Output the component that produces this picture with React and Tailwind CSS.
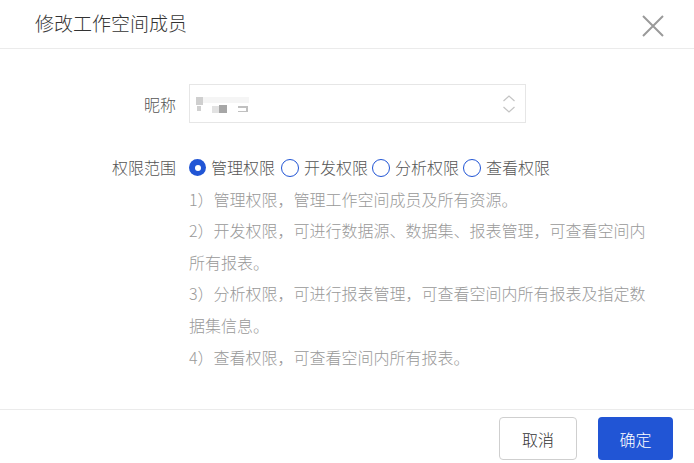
import React from "react";

const font = { fontFamily: '"Noto Sans CJK SC", "Noto Sans", sans-serif' };

function Radio({ checked, label, className = "" }) {
  return (
    <div className={"flex items-center " + className}>
      {checked ? (
        <span className="w-[17px] h-[17px] rounded-full bg-[#2155d5] flex items-center justify-center">
          <span className="w-[6px] h-[6px] rounded-full bg-white" />
        </span>
      ) : (
        <span className="w-[18px] h-[18px] rounded-full border-[1.5px] border-[#2155d5] bg-white" />
      )}
      <span className="ml-[5px] text-[16px] text-[#555]">{label}</span>
    </div>
  );
}

export default function App() {
  return (
    <div className="w-[694px] h-[463px] bg-white flex flex-col overflow-hidden font-light" style={font}>
      <div className="h-[49px] shrink-0 flex items-center justify-between pl-[35px] pr-[29px] pb-[4px] border-b border-[#ebebeb]">
        <span className="text-[19px] text-[#333] leading-none">修改工作空间成员</span>
        <svg width="24" height="24" viewBox="0 0 24 24" className="mt-[8px]">
          <path d="M2 2 L22 22 M22 2 L2 22" stroke="#9a9a9a" strokeWidth="2" fill="none" />
        </svg>
      </div>

      <div className="h-[360px] shrink-0 pt-[35px]">
        <div className="flex items-center h-[39px]">
          <div className="w-[176px] text-right text-[16px] text-[#555]">昵称</div>
          <div className="ml-[13px] w-[337px] h-[39px] border border-[#e6e6e6] flex items-center justify-between pl-[3px] pr-[8px]">
            <div className="relative w-[60px] h-[22px] mt-[2px]">
              <span className="absolute left-[3px] top-[3px] w-[7px] h-[8px] bg-[#cfcfcf]" />
              <span className="absolute left-[10px] top-[3px] w-[46px] h-[6px] bg-[#f5f5f5]" />
              <span className="absolute left-[4px] top-[12px] w-[4px] h-[5px] bg-[#d0d0d0]" />
              <span className="absolute left-[19px] top-[12px] w-[7px] h-[7px] bg-[#e2e2e2]" />
              <span className="absolute left-[26px] top-[11px] w-[8px] h-[8px] bg-[#a6a6a6]" />
              <span className="absolute left-[45px] top-[12px] w-[10px] h-[2px] bg-[#c0c0c0]" />
              <span className="absolute left-[53px] top-[12px] w-[2px] h-[5px] bg-[#c0c0c0]" />
              <span className="absolute left-[45px] top-[17px] w-[10px] h-[1px] bg-[#c0c0c0]" />
            </div>
            <svg width="16" height="20" viewBox="0 0 16 20">
              <path d="M2.5 7 L8 2 L13.5 7 M2.5 13 L8 18 L13.5 13" stroke="#c4c4c4" strokeWidth="1.2" fill="none" />
            </svg>
          </div>
        </div>

        <div className="flex mt-[29px]">
          <div className="w-[176px] text-right text-[16px] text-[#555] leading-[31.6px]">权限范围</div>
          <div className="ml-[13px] w-[470px] text-[16px] leading-[31.6px]">
            <div className="flex items-center h-[31.6px]">
              <Radio checked label="管理权限" className="mr-[6px]" />
              <Radio label="开发权限" className="mr-[4px]" />
              <Radio label="分析权限" className="mr-[4px]" />
              <Radio label="查看权限" />
            </div>
            <div className="text-[#999]">
              <p>1）管理权限，管理工作空间成员及所有资源。</p>
              <p>2）开发权限，可进行数据源、数据集、报表管理，可查看空间内所有报表。</p>
              <p>3）分析权限，可进行报表管理，可查看空间内所有报表及指定数据集信息。</p>
              <p>4）查看权限，可查看空间内所有报表。</p>
            </div>
          </div>
        </div>
      </div>

      <div className="flex-1 border-t border-[#ebebeb] flex items-start justify-end pt-[7px] pr-[21px]">
        <button className="w-[78px] h-[43px] border border-[#cfcfcf] rounded-[4px] bg-white text-[16px] text-[#333]">取消</button>
        <button className="ml-[21px] w-[75px] h-[43px] rounded-[4px] bg-[#2155d5] text-[16px] text-white">确定</button>
      </div>
    </div>
  );
}
